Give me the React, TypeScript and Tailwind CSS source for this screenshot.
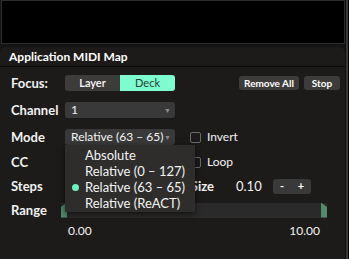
const font = { fontFamily: 'Lato, "Open Sans", sans-serif' }

function Label({ children }: { children: React.ReactNode }) {
  return <div className="w-[54px] shrink-0 text-[13px] font-bold text-[#f2f2f2] leading-[16px]">{children}</div>
}

function Select({ value }: { value: string }) {
  return (
    <div className="w-[110px] h-[16px] rounded-[3px] bg-[#3a3939] flex items-center pl-[6px] pr-[4px] text-[12px] text-[#f4f4f4]">
      <span className="flex-1 leading-[16px] whitespace-nowrap">{value}</span>
      <span className="text-[7px] text-[#8a8a8a] leading-none">▼</span>
    </div>
  )
}

function Check({ label }: { label: string }) {
  return (
    <div className="flex items-center gap-[6px] text-[12px] text-[#f2f2f2]">
      <div className="w-[11px] h-[11px] rounded-[2px] border border-[#6a6a6a]" />
      <span className="leading-[16px]">{label}</span>
    </div>
  )
}

const modes = ['Absolute', 'Relative (0 – 127)', 'Relative (63 – 65)', 'Relative (ReACT)']

export default function App() {
  return (
    <div className="w-[349px] h-[259px] bg-[#141414] flex overflow-hidden" style={font}>
      <div className="w-[345px] flex flex-col">
        <div className="h-[44px] bg-black border border-[#2c2c2c] ml-[1px]" />
        <div className="h-[3px]" />
        <div className="flex-1 bg-[#1c1b1a] rounded-t-[6px] flex flex-col relative">
          <div className="h-[20px] border-b border-[#0b0b0b] flex items-center px-[9px] text-[12px] font-bold text-white">
            Application MIDI Map
          </div>
          <div className="pl-[11px] pt-[8px] flex flex-col">
            <div className="h-[16px] flex items-center">
              <Label>Focus:</Label>
              <div className="flex w-[110px] h-[16px] rounded-[3px] overflow-hidden text-[11px]">
                <div className="flex-1 bg-[#3d3c3b] text-white font-semibold flex items-center justify-center">Layer</div>
                <div className="flex-1 bg-[#7dfccf] text-[#2b3a33] flex items-center justify-center">Deck</div>
              </div>
              <div className="ml-auto mr-[5px] flex gap-[5px] text-[10px] font-bold text-white">
                <div className="w-[60px] h-[14px] rounded-[3px] bg-[#3d3c3b] flex items-center justify-center">Remove All</div>
                <div className="w-[36px] h-[14px] rounded-[3px] bg-[#3d3c3b] flex items-center justify-center">Stop</div>
              </div>
            </div>
            <div className="h-[16px] mt-[11px] flex items-center">
              <Label>Channel</Label>
              <Select value="1" />
            </div>
            <div className="h-[16px] mt-[11px] flex items-center">
              <Label>Mode</Label>
              <div className="relative">
                <Select value="Relative (63 – 65)" />
                <div className="absolute left-0 top-full w-[130px] h-[67px] bg-[#2e2d2c] shadow-[0_2px_6px_rgba(0,0,0,0.6)] z-10 pt-[2px] flex flex-col text-[13px] text-[#f4f4f4]">
                  {modes.map((m, i) => (
                    <div key={i} className="h-[16px] flex items-center whitespace-nowrap">
                      <div className="w-[20px] flex justify-center">
                        {i === 2 && <div className="w-[7px] h-[7px] rounded-full bg-[#6ff0c0]" />}
                      </div>
                      <span className="leading-[16px]">{m}</span>
                    </div>
                  ))}
                </div>
              </div>
              <div className="ml-[15px]">
                <Check label="Invert" />
              </div>
            </div>
            <div className="h-[16px] mt-[9px] flex items-center">
              <Label>CC</Label>
              <div className="w-[110px]" />
              <div className="ml-[15px]">
                <Check label="Loop" />
              </div>
            </div>
            <div className="h-[16px] mt-[8px] flex items-center">
              <Label>Steps</Label>
              <div className="w-[149px] text-right text-[13px] font-bold text-[#f2f2f2] leading-[16px] whitespace-nowrap">Step Size</div>
              <div className="ml-[22px] w-[37px] text-[13px] text-[#f2f2f2] leading-[16px]">0.10</div>
              <div className="w-[38px] h-[15px] rounded-[3px] bg-[#3a3939] flex items-center justify-around text-[11px] text-white font-bold">
                <span>-</span>
                <span>+</span>
              </div>
            </div>
            <div className="h-[16px] mt-[8px] flex items-center">
              <div className="w-[50px] shrink-0 text-[13px] font-bold text-[#f2f2f2] leading-[16px]">Range</div>
              <div className="w-[266px] h-[15px] bg-[#2b2a2a] flex justify-between">
                <div className="w-[6px] h-full bg-[#4f8b6c] [clip-path:polygon(0_30%,100%_0,100%_100%,0_100%)]" />
                <div className="w-[6px] h-full bg-[#4f8b6c] [clip-path:polygon(0_0,100%_30%,100%_100%,0_100%)]" />
              </div>
            </div>
            <div className="h-[14px] mt-[6px] flex items-center text-[12px] text-[#f4f4f4]">
              <span className="ml-[57px]">0.00</span>
              <span className="ml-auto mr-[25px]">10.00</span>
            </div>
          </div>
        </div>
      </div>
      <div className="w-[4px] flex">
        <div className="w-[1px] bg-[#0c0c0c]" />
        <div className="w-[2px] bg-[#3a3a3a]" />
        <div className="w-[1px] bg-black" />
      </div>
    </div>
  )
}
